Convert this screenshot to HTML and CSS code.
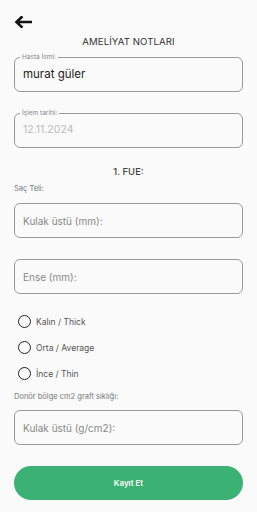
FILE: index.html
```html
<!DOCTYPE html>
<html lang="tr">
<head>
  <meta charset="UTF-8" />
  <meta name="viewport" content="width=device-width, initial-scale=1.0">
  <title>Ameliyat Notları</title>
  <link rel="stylesheet" href="styles.css">
</head>
<body>
  <div class="top-bar">
    <button class="back-btn" aria-label="Geri">
      <svg width="18" height="12" viewBox="0 0 18 12"><path d="M17 6H3M7.5 1.2L2.5 6l5 4.8" fill="none" stroke="#111" stroke-width="2.6" stroke-linecap="square"/></svg>
    </button>
  </div>

  <h1 class="page-title">AMELİYAT NOTLARI</h1>

  <fieldset class="field">
    <legend>Hasta İsmi:</legend>
    <input type="text" value="murat güler">
  </fieldset>

  <fieldset class="field disabled">
    <legend>İşlem tarihi:</legend>
    <input type="text" value="12.11.2024" disabled>
  </fieldset>

  <h2 class="section-title">1. FUE:</h2>
  <div class="sub-label">Saç Teli:</div>

  <div class="box"><input type="text" placeholder="Kulak üstü (mm):"></div>
  <div class="box"><input type="text" placeholder="Ense (mm):"></div>

  <div class="radios">
    <label class="radio"><span class="dot"></span>Kalın / Thick</label>
    <label class="radio"><span class="dot"></span>Orta / Average</label>
    <label class="radio"><span class="dot"></span>İnce / Thin</label>
  </div>

  <div class="sub-label donor">Donör bölge cm2 graft sıklığı:</div>
  <div class="box"><input type="text" placeholder="Kulak üstü (g/cm2):"></div>

  <button class="save-btn">Kayıt Et</button>
</body>
</html>
```

FILE: styles.css
```css
* { box-sizing:border-box; }
body { margin:0; padding:0 14px; background:#fafafa; font-family:'Inter', 'Noto Sans', sans-serif; color:#222; }
.top-bar { height:28px; display:flex; align-items:flex-end; }
.back-btn { background:none; border:none; padding:0; margin:0; width:18px; height:12px; cursor:pointer; display:block; }
.back-btn svg { display:block; }
.page-title { margin:7px 0 0; text-align:center; font-size:9.6px; font-weight:400; color:#333; letter-spacing:.1px; line-height:14px; }
.field { margin:4px 0 0; padding:0 8px; border:1px solid #999; border-radius:6px; height:39px; }
.field legend { font-size:6.5px; color:#888; padding:0 2px; margin-left:-3px; line-height:8px; }
.field input { width:100%; border:none; background:transparent; outline:none; padding:0; margin-top:6px; font:inherit; font-size:11.5px; color:#222; }
.field.disabled { margin-top:17px; }
.field.disabled input { color:#bbb; font-size:10.5px; }
.section-title { margin:18px 0 0; text-align:center; font-size:9.5px; font-weight:500; color:#444; line-height:12px; }
.sub-label { margin-top:6px; font-size:7.5px; color:#777; line-height:10px; }
.box { margin:9px 0 21px; border:1px solid #999; border-radius:6px; height:35px; display:flex; align-items:center; padding:0 8px; }
.box + .box { margin-top:0; }
.box input { width:100%; border:none; background:transparent; outline:none; padding:0; font:inherit; font-size:10px; color:#222; }
.box input::placeholder { color:#888; }
.radios { display:flex; flex-direction:column; gap:13px; margin-top:0; padding-left:4px; }
.radio { display:flex; align-items:center; gap:5px; font-size:8.5px; color:#555; height:13px; }
.dot { width:13px; height:13px; border:1.5px solid #222; border-radius:50%; }
.donor { margin-top:12px; }
.donor + .box { margin-top:8px; }
.save-btn { display:block; width:100%; height:34px; margin-top:2px; border:none; border-radius:17px; background:#3bb273; color:#fff; font:inherit; font-size:8px; font-weight:600; cursor:pointer; }
```
